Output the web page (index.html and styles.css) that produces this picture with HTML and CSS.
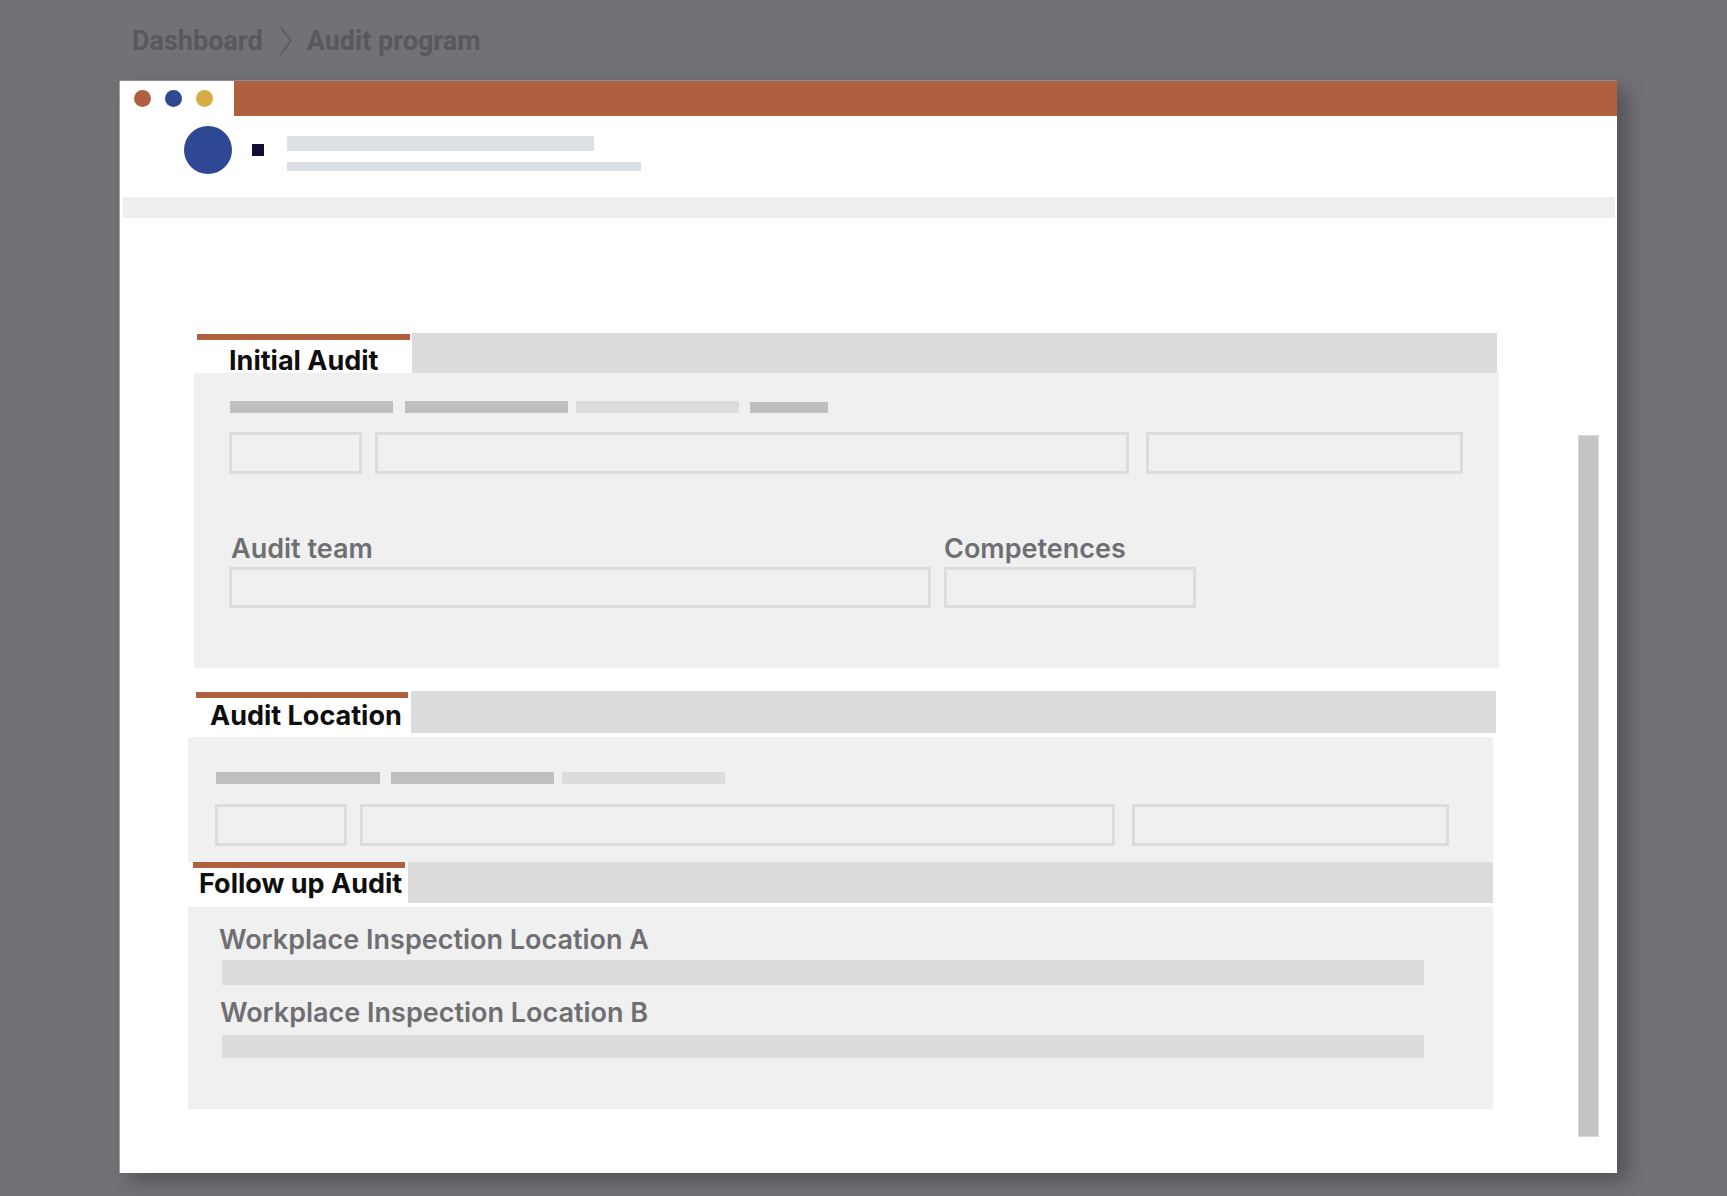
FILE: index.html
```html
<!DOCTYPE html>
<html lang="en">
<head>
<meta charset="utf-8">
<title>Audit program</title>
<link rel="stylesheet" href="styles.css">
</head>
<body>
<nav class="crumbs">
  <span class="crumb">Dashboard</span>
  <svg class="chev" width="14" height="30" viewBox="0 0 14 30"><polyline points="1.5,1 12,14.5 1.5,29" fill="none" stroke="#5a595e" stroke-width="1.4"/></svg>
  <span class="crumb">Audit program</span>
</nav>

<div class="window">
  <div class="titlebar">
    <div class="dots">
      <span class="dot dot-red"></span>
      <span class="dot dot-blue"></span>
      <span class="dot dot-yellow"></span>
    </div>
    <div class="title-fill"></div>
  </div>

  <header class="apphead">
    <div class="avatar"></div>
    <div class="square"></div>
    <div class="lines">
      <div class="line line-1"></div>
      <div class="line line-2"></div>
    </div>
  </header>
  <div class="band"></div>

  <main class="content">
    <div class="sections">
      <section class="sec sec-initial">
        <div class="sec-head">
          <div class="tab">Initial Audit</div>
          <div class="head-fill"></div>
        </div>
        <div class="panel">
          <div class="bars">
            <span class="bar dark w163"></span>
            <span class="bar dark w163 g12"></span>
            <span class="bar light w163 g8"></span>
            <span class="bar dark w78 g11 short"></span>
          </div>
          <div class="inputs">
            <span class="input w133"></span>
            <span class="input w754 g13"></span>
            <span class="input w317 g17"></span>
          </div>
          <div class="team-grid">
            <div class="field">
              <div class="label">Audit team</div>
              <span class="input input-tall"></span>
            </div>
            <div class="field">
              <div class="label">Competences</div>
              <span class="input input-tall"></span>
            </div>
          </div>
        </div>
      </section>

      <section class="sec sec-location">
        <div class="sec-head">
          <div class="tab">Audit Location</div>
          <div class="head-fill"></div>
        </div>
        <div class="panel">
          <div class="bars">
            <span class="bar dark w164"></span>
            <span class="bar dark w163 g11"></span>
            <span class="bar light w163 g8"></span>
          </div>
          <div class="inputs">
            <span class="input w132"></span>
            <span class="input w755 g13"></span>
            <span class="input w317 g17"></span>
          </div>
        </div>
      </section>

      <section class="sec sec-follow">
        <div class="sec-head">
          <div class="tab">Follow up Audit</div>
          <div class="head-fill"></div>
        </div>
        <div class="panel">
          <div class="label loc-label">Workplace Inspection Location A</div>
          <div class="loc-bar"></div>
          <div class="label loc-label loc-label-b">Workplace Inspection Location B</div>
          <div class="loc-bar loc-bar-b"></div>
        </div>
      </section>
    </div>
    <div class="scrollbar"></div>
  </main>
</div>
</body>
</html>
```

FILE: styles.css
```css
* { box-sizing: border-box; }

html, body {
  margin: 0;
  padding: 0;
}

body {
  background: #727176;
  width: 1727px;
  height: 1196px;
  overflow: hidden;
  font-family: "Inter", "Liberation Sans", sans-serif;
}

/* breadcrumb */
.crumbs {
  height: 81px;
  padding: 28px 0 0 132px;
  display: flex;
  align-items: flex-start;
}

.crumb {
  font-family: "Roboto", "Liberation Sans", sans-serif;
  font-weight: 700;
  font-size: 27px;
  line-height: 27px;
  color: #59585d;
}

.chev {
  margin: -2px 14px 0 16px;
  display: block;
}

/* window */
.window {
  margin-left: 120px;
  width: 1497px;
  height: 1092px;
  background: #ffffff;
  overflow: hidden;
  box-shadow: -1px 0 0 #a4a4a7, 0 -1px 0 #8f8f93, 10px 8px 18px rgba(0, 0, 0, 0.28);
}

.titlebar {
  display: flex;
  height: 35px;
}

.dots {
  width: 114px;
  display: flex;
  align-items: center;
  gap: 14px;
  padding-left: 14px;
}

.dot {
  width: 17px;
  height: 17px;
  border-radius: 50%;
  display: block;
}

.dot-red { background: #b0603f; }
.dot-blue { background: #2e4893; }
.dot-yellow { background: #d8ac44; }

.title-fill {
  flex: 1;
  background: #b0603f;
}

.apphead {
  height: 81px;
  display: flex;
  align-items: flex-start;
  padding: 10px 0 0 64px;
}

.avatar {
  width: 48px;
  height: 48px;
  border-radius: 50%;
  background: #2e4893;
}

.square {
  width: 12px;
  height: 12px;
  background: #120d33;
  margin: 18px 0 0 20px;
}

.lines {
  margin: 10px 0 0 23px;
}

.line {
  background: #dcdfe3;
}

.line-1 { width: 307px; height: 15px; }
.line-2 { width: 354px; height: 9px; margin-top: 11px; }

.band {
  height: 21px;
  margin: 0 2px 0 3px;
  background: #eeeeec;
}

/* content */
.content {
  display: flex;
  align-items: flex-start;
  padding: 115px 0 0 68px;
}

.sections {
  width: 1311px;
  flex: none;
}

.scrollbar {
  flex: none;
  width: 21px;
  height: 702px;
  margin: 102px 0 0 79px;
  background: #c5c6c3;
  border: 1px solid #d9d9d7;
}

.sec {
  width: 1305px;
}

.sec-head {
  display: flex;
  align-items: flex-start;
}

.tab {
  flex: none;
  border-top: 6px solid #b0603f;
  font-weight: 700;
  font-size: 27px;
  line-height: 27px;
  color: #0e0e0e;
  white-space: nowrap;
}

.head-fill {
  flex: 1;
  background: #dcdcdc;
}

.panel {
  background: #f0f0f0;
}

/* section 1 */
.sec-initial { margin-left: 6px; }
.sec-initial .tab {
  margin: 1px 0 0 3px;
  width: 213px;
  height: 39px;
  padding: 7px 0 0 32px;
}
.sec-initial .head-fill {
  margin: 0 2px 0 2px;
  height: 40px;
}
.sec-initial .panel {
  height: 295px;
  padding: 28px 0 0 36px;
}

/* section 2 */
.sec-location { margin-top: 23px; }
.sec-location .tab {
  margin: 1px 0 0 8px;
  width: 212px;
  height: 45px;
  padding: 4px 0 0 14px;
}
.sec-location .head-fill {
  margin: 0 -3px 0 3px;
  height: 42px;
}
.sec-location .panel {
  height: 125px;
  padding: 35px 0 0 28px;
}

/* section 3 */
.sec-follow .tab {
  margin: 0 0 0 5px;
  width: 212px;
  height: 45px;
  padding: 2px 0 0 6px;
}
.sec-follow .head-fill {
  margin-left: 3px;
  height: 41px;
}
.sec-follow .panel {
  height: 202px;
  padding: 19px 0 0 31px;
}

/* placeholder bars */
.bars {
  display: flex;
  align-items: flex-start;
}

.bar {
  display: block;
  height: 12px;
}
.bar.short { height: 11px; margin-top: 1px; }
.bar.dark { background: #bfbfbe; }
.bar.light { background: #dcdcdc; }

.w78 { width: 78px; }
.w132 { width: 132px; }
.w133 { width: 133px; }
.w163 { width: 163px; }
.w164 { width: 164px; }
.w317 { width: 317px; }
.w754 { width: 754px; }
.w755 { width: 755px; }
.g8 { margin-left: 8px; }
.g11 { margin-left: 11px; }
.g12 { margin-left: 12px; }
.g13 { margin-left: 13px; }
.g17 { margin-left: 17px; }

.inputs {
  display: flex;
  margin: 19px 0 0 -1px;
}
.sec-location .inputs { margin-top: 20px; }

.input {
  display: block;
  height: 42px;
  border: 3px solid #dcdcdc;
  background: #f0f0f0;
}

.team-grid {
  display: grid;
  grid-template-columns: 702px 252px;
  column-gap: 13px;
  margin: 61px 0 0 -1px;
}

.label {
  font-weight: 600;
  font-size: 27px;
  line-height: 27px;
  color: #6f6f73;
  white-space: nowrap;
}

.field .label {
  padding-left: 2px;
  margin-bottom: 5px;
}

.field + .field .label {
  padding-left: 0;
}

.input-tall {
  height: 41px;
}

.loc-bar {
  width: 1202px;
  height: 25px;
  margin: 7px 0 0 3px;
  background: #dcdcdc;
}

.loc-label-b {
  margin-top: 14px;
  padding-left: 1px;
}

.loc-bar-b {
  height: 23px;
  margin-top: 9px;
}
```
